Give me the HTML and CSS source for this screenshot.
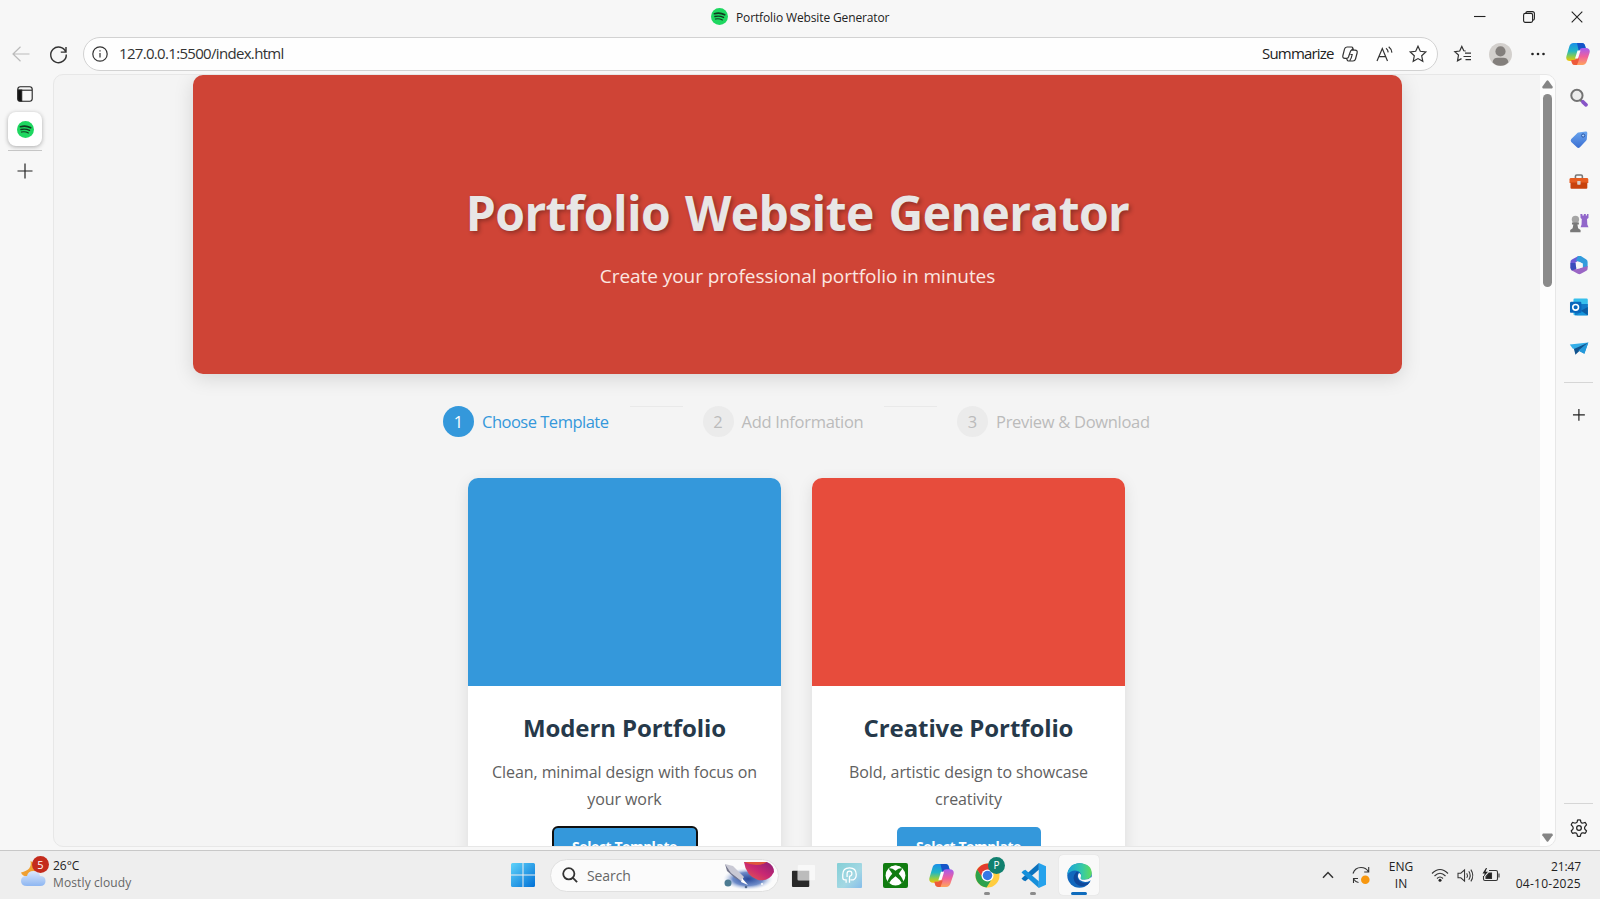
FILE: index.html
```html
<!DOCTYPE html>
<html lang="en">
<head>
<meta charset="utf-8">
<title>Portfolio Website Generator</title>
<link rel="stylesheet" href="styles.css">
</head>
<body>
<svg width="0" height="0" class="defs">
  <defs>
    <linearGradient id="cpA" x1="0" y1="0" x2="0" y2="1"><stop offset="0" stop-color="#1b8fe8"/><stop offset=".45" stop-color="#22b6c4"/><stop offset=".75" stop-color="#8ccc4c"/><stop offset="1" stop-color="#f5c400"/></linearGradient>
    <linearGradient id="cpB" x1="0" y1="0" x2="0" y2="1"><stop offset="0" stop-color="#a35cf0"/><stop offset=".5" stop-color="#f0609c"/><stop offset="1" stop-color="#ffa45c"/></linearGradient>
    <linearGradient id="win" x1="0" y1="0" x2="1" y2="1"><stop offset="0" stop-color="#5fd3fa"/><stop offset="1" stop-color="#0070d6"/></linearGradient>
    <linearGradient id="edgeG" x1="0" y1="0" x2="1" y2="0"><stop offset="0" stop-color="#1aa4dc"/><stop offset=".6" stop-color="#35c9a8"/><stop offset="1" stop-color="#5fdc5c"/></linearGradient>
    <linearGradient id="cloud" x1="0" y1="0" x2="0" y2="1"><stop offset="0" stop-color="#dce8fa"/><stop offset="1" stop-color="#8db6f2"/></linearGradient>
    <linearGradient id="peo" x1="0" y1="0" x2="1" y2="1"><stop offset="0" stop-color="#84cfd6"/><stop offset=".6" stop-color="#a4d8e4"/><stop offset="1" stop-color="#86bdea"/></linearGradient>
    <linearGradient id="tag" x1="0" y1="0" x2="0" y2="1"><stop offset="0" stop-color="#69a5ee"/><stop offset="1" stop-color="#3c6fd2"/></linearGradient>
    <linearGradient id="planet" x1="0" y1="1" x2="1" y2="0"><stop offset="0" stop-color="#e8604a"/><stop offset=".5" stop-color="#c92872"/><stop offset="1" stop-color="#8a1f78"/></linearGradient>
    <radialGradient id="space"><stop offset="0" stop-color="#27489a"/><stop offset=".6" stop-color="#6e8cc9"/><stop offset="1" stop-color="#d9e2f3" stop-opacity="0"/></radialGradient>
    <symbol id="spotify" viewBox="0 0 16 16"><circle cx="8" cy="8" r="8" fill="#1ed760"/><g fill="none" stroke="#123a20" stroke-linecap="round"><path d="M3.2 5.4c3.2-.9 6.800-.6 9.700 1" stroke-width="1.500"/><path d="M3.700 8c2.800-.7 5.700-.4 8.100.9" stroke-width="1.300"/><path d="M4.200 10.400c2.300-.5 4.500-.3 6.500.8" stroke-width="1.100"/></g></symbol>
    <symbol id="copilot" viewBox="0 0 24 24"><path d="M7.500 1H16c1.700 0 2.500 1 3 2.500L20 7h-3.500c-2 0-3 1-3.600 3l-2 6.500c-.5 1.700-1.500 2.500-3.200 2.500H4C1 19-.4 17 .5 14L3.300 4.500C4 2.200 5.300 1 7.500 1z" fill="url(#cpA)"/><path d="M11 1h5c1.700 0 2.500 1 3 2.500L20 7h-3.500c-2 0-3 .8-3.600 2.700z" fill="#1554c8"/><path d="M16.500 23H9c-1.700 0-2.700-.8-3.200-2.500L5.200 18h2.500c2 0 3-1 3.500-2.500l2.200-7C14 6.700 15 6 16.500 6H20c3 0 4.400 2 3.500 5l-2.800 8.500c-.7 2.300-2 3.500-4.200 3.500z" fill="url(#cpB)"/><path d="M5.200 18h2.500c2 0 3-1 3.500-2.500l.8-2.500 1 4.500-2 5.500H9c-1.700 0-2.700-.8-3.200-2.500z" fill="#ee5a3a"/><path d="M11.500 8.500h3l-2.500 8h-3z" fill="#fafafa"/></symbol>
  </defs>
</svg>
<div class="screen">
  <header class="titlebar">
    <div class="tab-title"><svg class="s17"><use href="#spotify"/></svg><span>Portfolio Website Generator</span></div>
    <div class="window-controls">
      <svg viewBox="0 0 12 12"><path d="M0 5.500h11.500"/></svg>
      <svg viewBox="0 0 12 12"><rect x=".6" y="2.400" width="9" height="9" rx="1.600"/><path d="M3 2.200V2Q3 .6 4.400.6h5Q11.400.6 11.400 2.600v5Q11.400 9 10 9.200"/></svg>
      <svg viewBox="0 0 12 12"><path d="M.7.7l10.600 10.600M11.300.7L.7 11.300"/></svg>
    </div>
  </header>

  <nav class="toolbar">
    <svg class="back" viewBox="0 0 18 16"><path d="M8.500.8L1 8l7.500 7.200M1 8h16.500"/></svg>
    <svg class="reload" viewBox="0 0 20 20"><path d="M17.700 7.500A8.200 8.200 0 1 0 18.200 10M17.900 2v5.500h-5.500"/></svg>
    <div class="address">
      <svg class="info" viewBox="0 0 16 16"><circle cx="8" cy="8" r="7.200"/><path d="M8 7v4.500M8 4.300v1.300"/></svg>
      <span class="url">127.0.0.1:5500/index.html</span>
      <span class="summarize">Summarize</span>
      <svg class="cp-line" viewBox="0 0 16 16"><path d="M5 1h4.500q1 0 1.300 1l.7 2.200H10Q8.800 4.200 8.400 5.500L6.500 11Q6 12.300 4.800 12.300H3Q.2 12.300.9 9.500L2.500 3.200Q3 1 5 1zM11 15H6.500q-1 0-1.300-1l-.7-1.700M11.500 4.200H13q2.800 0 2.100 2.800l-1.600 6Q13 15 11 15M10.800 2.500L9.300 4.400M8.400 8.500h1.800Q9.500 12.300 7.800 14.500"/></svg>
      <svg class="read" viewBox="0 0 17 16"><path d="M1 15L6.300 2.500 11.500 15M3 10.700h6.600M10 2.200q2 1.300 2.200 4.200M12.700.7q2.900 2.200 3.200 5.900"/></svg>
      <svg class="star" viewBox="0 0 18 18"><path d="M9 1.200l2.300 5.100 5.500.7-4.100 3.800 1.100 5.500L9 13.600l-4.800 2.700 1.100-5.500L1.200 7l5.500-.7z"/></svg>
    </div>
    <svg class="favs" viewBox="0 0 18 18"><path d="M11.700 6L9.800 5.800 7.800 1.500 5.700 6l-4.900.7L4.500 10l-1 5.800 4-2.200M11 8.200h6M9.500 11.500H17M11.500 14.700H17"/></svg>
    <svg class="avatar" viewBox="0 0 24 24"><circle cx="12" cy="12" r="12" fill="#d3d0cd"/><circle cx="12" cy="8.800" r="5.300" fill="#837f7c"/><path d="M3.700 20Q4.500 15.500 9 15.500h6q4.500 0 5.300 4.500Q17 23.700 12 23.700T3.700 20z" fill="#837f7c"/></svg>
    <svg class="more" viewBox="0 0 14 4"><circle cx="1.500" cy="2" r="1.300"/><circle cx="7" cy="2" r="1.300"/><circle cx="12.500" cy="2" r="1.300"/></svg>
    <svg class="copilot"><use href="#copilot"/></svg>
  </nav>

  <div class="workspace">
    <aside class="tabs-rail">
      <svg class="tabs-icon" viewBox="0 0 16 16"><rect x=".8" y=".8" width="14.400" height="14.400" rx="2.500"/><path d="M1 4.200h14"/><path d="M1 4h3.700v11H2.500Q1 15 1 13z" fill="#111"/></svg>
      <div class="active-tab"><svg class="s17"><use href="#spotify"/></svg></div>
      <div class="tab-rule"></div>
      <svg class="plus" viewBox="0 0 16 16"><path d="M8 .5v15M.5 8h15"/></svg>
    </aside>

    <main class="page">
      <div class="content">
        <section class="hero">
          <h1>Portfolio Website Generator</h1>
          <p>Create your professional portfolio in minutes</p>
        </section>
        <ol class="steps">
          <li class="step active"><b>1</b><span class="t1">Choose Template</span></li>
          <li class="line"></li>
          <li class="step"><b>2</b><span class="t2">Add Information</span></li>
          <li class="line"></li>
          <li class="step"><b>3</b><span class="t3">Preview &amp; Download</span></li>
        </ol>
        <section class="cards">
          <article class="card">
            <div class="preview blue"></div>
            <h2>Modern Portfolio</h2>
            <p>Clean, minimal design with focus on<br>your work</p>
            <button class="select focused">Select Template</button>
          </article>
          <article class="card">
            <div class="preview red"></div>
            <h2>Creative Portfolio</h2>
            <p>Bold, artistic design to showcase<br>creativity</p>
            <button class="select">Select Template</button>
          </article>
        </section>
      </div>
      <div class="scrollbar">
        <svg viewBox="0 0 11 9"><path d="M4.600.8q.9-1 1.800 0l4.300 6Q11 8.500 9.800 8.500H1.200Q0 8.500.3 6.800z"/></svg>
        <i></i>
        <svg class="down" viewBox="0 0 11 9"><path d="M4.600 8.200q.9 1 1.800 0l4.300-6Q11 .5 9.800.5H1.200Q0 .5.3 2.200z"/></svg>
      </div>
    </main>

    <aside class="apps-rail">
      <svg viewBox="0 0 20 20"><path d="M11.500 12l1.500 1.500" stroke="#777" stroke-width="2.500"/><path d="M14 14l3.200 3" stroke="#8855c8" stroke-width="3.800" stroke-linecap="round"/><circle cx="8" cy="7.500" r="5.700" fill="#ececec" stroke="#737373" stroke-width="2"/></svg>
      <svg viewBox="0 0 20 20"><path d="M9.500 2.600L17 1.500q1.500 0 1.500 1.500L18 9q0 1-1 2l-6 6.500q-1.500 1.200-3 0L2.300 12q-1.200-1.500 0-3L8 3.500q.7-.8 1.500-.9z" fill="url(#tag)"/><circle cx="14.300" cy="5.600" r="1.600" fill="#a8d1ff" stroke="#244fa0"/></svg>
      <svg viewBox="0 0 20 20"><path d="M6.500 6.500V4.300q0-1.300 1.300-1.300h4.400q1.300 0 1.300 1.300v2.200" fill="none" stroke="#777" stroke-width="1.600"/><path d="M2 6h16q1.500 0 1.500 1.500V11H.5V7.500Q.5 6 2 6z" fill="#e65c20"/><path d="M1.500 10.500h17V16q0 1-1 1h-15q-1 0-1-1z" fill="#c8420c"/><rect x="8.300" y="9" width="3.400" height="3.800" rx=".6" fill="#d9cfca"/></svg>
      <svg viewBox="0 0 20 20"><path d="M11.500 1h2v1.500H15V1h2v1.500h1.200V1h1.500v4l-1.500 1 .3 5.500 1.200 3h-8l1-3 .2-5.500-1.200-1z" fill="#9166ca"/><circle cx="6.500" cy="6.500" r="3.700" fill="#a5a5a5"/><path d="M3 9.500h7v2H8.500l.7 3.800 2.500 2v2.200H1.200v-2.200l2.500-2 .7-3.800H3z" fill="#797979"/></svg>
      <svg viewBox="0 0 20 20"><path d="M9.500 1L3 4.500Q1.500 5.500 1.500 7v6l5-2V7.500L13 3.500z" fill="#6d5bd6"/><path d="M9 1h3l5.500 3.500q1.300 1 1.300 2.500v5.500L14 15V8.500L7 5.500z" fill="#329bdc"/><path d="M18.800 11v3q0 1.300-1.300 2L12 19q-1.500.8-3 0L2.500 15.500 1.300 12l6.200 2.500z" fill="#9a66c5"/><path d="M1.500 8v5.500q.3 1.500 1.500 2.200L7.500 14 6.500 8z" fill="#3b4dbb"/><path d="M10.200 6.700l3.100 1.800v3.400l-3.100 1.800-3.100-1.800V8.500z" fill="#f7f7f7"/></svg>
      <svg viewBox="0 0 20 20"><rect x="4.500" y="1.500" width="14.500" height="17" rx="1.200" fill="#36bfec"/><path d="M5 7h14v11.500H6z" fill="#117ac7"/><path d="M19 10v8.500H7.500z" fill="#1493da"/><path d="M12 14l7-4v8.500z" fill="#0c5ba2"/><rect x="1" y="4.800" width="11.500" height="11.200" rx="1.200" fill="#0967bb"/><circle cx="6.700" cy="10.400" r="2.900" fill="none" stroke="#fff" stroke-width="1.600"/></svg>
      <svg viewBox="0 0 20 20"><path d="M.8 5.500L19.500 3.500 9 11.500 3.700 9.500z" fill="#35aee8"/><path d="M19.500 3.500L15.500 15 9.500 11.500z" fill="#168acd"/><path d="M19.500 3.500L6.500 16 5 10z" fill="#11538e"/><path d="M19.500 3.500L15.500 15 9.500 11.500z" fill="#2398da"/></svg>
      <hr>
      <svg class="plus" viewBox="0 0 20 20"><path d="M10 4v12M4 10h12"/></svg>
      <div class="rail-end"><hr>
        <svg class="gear" viewBox="0 0 24 24"><path d="M9.700 3.500L10.300 1.200q1.700-.4 3.400 0l.6 2.300q.4 1 1.500 1.300l1.300-.1 2.200-.7q1.200 1.300 1.700 3l-1.600 1.700q-.7.800-.7 1.900t.7 1.900l1.600 1.700q-.5 1.700-1.700 3l-2.200-.6q-1.100-.2-2 .3-.7.500-1 1.400l-.5 2.200q-1.700.4-3.400 0l-.5-2.200q-.3-1-1.100-1.500-.9-.5-2-.2l-2.200.6q-1.200-1.300-1.700-3l1.600-1.700q.7-.8.700-1.900t-.7-1.900L2.700 7Q3.200 5.300 4.400 4l2.200.7q1.100.2 2-.3.800-.2 1.100-.9z" transform="translate(0 1.300)"/><circle cx="12" cy="12" r="2.800"/></svg>
      </div>
    </aside>
  </div>

  <footer class="taskbar">
    <div class="weather">
      <svg viewBox="0 0 28 32"><path d="M10.500 5q2 9-9.500 11.500 1.500 4.500 8 4 9-2 8-12z" fill="#f0a030"/><path d="M7 30q-6 0-6-5t6-5q1-5 6.500-5t6.500 5q5.500 0 5.500 5T20 30z" fill="url(#cloud)"/></svg>
      <span class="badge">5</span>
      <div><div class="temp">26°C</div><div class="cond">Mostly cloudy</div></div>
    </div>
    <div class="dock">
      <svg class="start" viewBox="0 0 24 24"><path d="M0 1.500Q0 0 1.500 0h10v11.500H0zM12.500 0h10Q24 0 24 1.500v10H12.500zM0 12.500h11.500V24h-10Q0 24 0 22.500zM12.500 12.500H24v10q0 1.500-1.500 1.500h-10z" fill="url(#win)"/></svg>
      <div class="search">
        <svg class="glass" viewBox="0 0 16 16"><circle cx="6.800" cy="6.800" r="5.600"/><path d="M10.900 10.900l4.200 4.200"/></svg>
        <span>Search</span>
        <svg class="art" viewBox="0 0 52 28"><ellipse cx="25" cy="18" rx="25" ry="11" fill="url(#space)"/><circle cx="5" cy="22" r="3.500" fill="#4d7b92"/><path d="M21 1h23q7 3 7 10-5 10-16 8Q23 15 21 1z" fill="url(#planet)"/><path d="M21 1h23q-10 6-23 0z" fill="#e0553c"/><path d="M2 3l8 2 11 11-3 4L8 12z" fill="#c9c9d4"/><path d="M2 3l6 9 10 8-6-3-8-7z" fill="#74768c"/><path d="M19 17l6 7-7-3z" fill="#fff"/><circle cx="23" cy="26" r="1.300" fill="#52698e"/><circle cx="39" cy="23" r="1" fill="#fff"/></svg>
      </div>
      <div class="app"><svg viewBox="0 0 26 26"><rect x="1" y="8" width="18" height="17" rx="1" fill="#292929"/><rect x="7" y="2" width="18" height="16" rx="1" fill="#f8f8f8"/><path d="M7 8h12v10H7z" fill="#bcbcbc"/></svg></div>
      <div class="app"><svg viewBox="0 0 26 26"><rect width="26" height="26" rx="1" fill="url(#peo)"/><path d="M9.500 20.500v-3H8q-2 0-2-2.500v-3q0-7 7-7t7 7q0 4.500-3 5.500H14M10.500 14.500V11q0-2.500 2.500-2.500t2.500 2.500-2.500 3v6.500" fill="none" stroke="#fff" stroke-width="1.300"/></svg></div>
      <div class="app"><svg viewBox="0 0 26 26"><rect width="26" height="26" rx="2" fill="#107c10"/><circle cx="13" cy="13" r="10.300" fill="#fff"/><path d="M5.800 5.600Q9 4.700 13 8q4-3.300 7.200-2.400l-3.800 5.700q4.500 5 4.800 8.500l-1.600 1.200Q17.500 17 13 13.800 8.500 17 6.400 21l-1.600-1.200q.3-3.500 4.800-8.500z" fill="#107c10"/><path d="M7.500 4.200Q10.500 4 13 6q2.500-2 5.500-1.800Q13 .8 7.500 4.200z" fill="#fff"/></svg></div>
      <div class="app"><svg><use href="#copilot"/></svg></div>
      <div class="app run"><svg viewBox="0 0 26 26"><circle cx="13" cy="13" r="12.500" fill="#ffcd40"/><path d="M2.200 6.800A12.500 12.500 0 0 1 23.800 6.800L13 7.500 8 16z" fill="#e33b2e"/><path d="M2.200 6.800A12.500 12.500 0 0 0 12 25.500l6-9.600-10-.2z" fill="#2da24c"/><circle cx="13" cy="13" r="6.300" fill="#fff"/><circle cx="13" cy="13" r="4.900" fill="#3578e5"/></svg><span class="profile">P</span></div>
      <div class="app run"><svg viewBox="0 0 26 26"><path d="M18.500 0L26 3.500v19L18.500 26z" fill="#25a2ec"/><path d="M18.500 0v7L4.500 19 2.300 18 .5 16z" fill="#0b72bd"/><path d="M18.500 26v-7L4.500 7 2.300 8 .5 10z" fill="#1690db"/></svg></div>
      <div class="app current"><svg viewBox="0 0 26 26"><circle cx="13" cy="13" r="12.700" fill="#1268bd"/><path d="M.3 12Q2 .3 13.500.3 25.700 1 25.700 11q-.7 6.500-8 6.500-4.500 0-3.500-2.800Q16 11 12 8.500 5.500 6 .3 12z" fill="url(#edgeG)"/><path d="M10 9Q4 15 9.500 21.500 14 26 21 22.600q2-1.200 3-3-6 3-11-.6Q9 15 12 10z" fill="#10489a"/><path d="M12.500 10.500Q10 14 13 17.500q5 4 11.500.6 1 0 .6 1.300l1-.5v-4l-1.300-.2q-2.500 3-7 2.800-4.500 0-3.500-2.800Q15.500 12 12.500 10.500z" fill="#fafafa"/></svg></div>
    </div>
    <div class="tray">
      <svg class="chev" viewBox="0 0 12 8"><path d="M1 6.800l5-5.300 5 5.300"/></svg>
      <svg class="sync" viewBox="0 0 18 18"><path d="M1 7.500Q3 1.500 9 1.500q5 0 7.300 4M16.700 1v5h-4.500M1.500 17v-4.500H6M1.500 13q2 3 5 3.500"/><circle cx="13.300" cy="13.700" r="4.300" fill="#f7970f" stroke="none"/></svg>
      <div class="lang">ENG<br>IN</div>
      <svg class="wifi" viewBox="0 0 18 14"><path d="M1 5.500q8-8 16 0M3.500 8q5.500-5.500 11 0M6 10.500q3-3 6 0"/><circle cx="9" cy="12.300" r="1.500" fill="#222" stroke="none"/></svg>
      <svg class="vol" viewBox="0 0 18 16"><path d="M1 5.500h3L8 2v12l-4-3.500H1zM10.300 5.500q1.500 2.500 0 5M12.500 3.500q3 4.500 0 9M14.700 1.700q4.200 6.300 0 12.600"/></svg>
      <svg class="battery" viewBox="0 0 18 14"><path d="M7 2.500h7q1.500 0 1.500 1.500v7q0 1.500-1.500 1.500H3q-1.500 0-1.500-1.500V8M17 5.500v4"/><path d="M4 10.500V8.500L7 5h2.500v5.500z" fill="#222"/><path d="M4 0L.5 5.500h2.300L1.500 9 6 3.800H3.500L5 0z" fill="#222" stroke="none"/></svg>
      <div class="clock">21:47<br><span>04-10-2025</span></div>
    </div>
  </footer>
</div>
</body>
</html>
```

FILE: styles.css
```css
* { box-sizing: border-box; }
body { margin: 0; overflow: hidden; font-family: "Open Sans", "Noto Sans", sans-serif; color: #222; }
svg { display: block; flex: none; overflow: visible; }
.defs { position: absolute; }
.screen { width: 1600px; height: 899px; display: grid; grid-template-rows: 34px 40px 776px 49px; background: #f7f7f7; }
.s17 { width: 17px; height: 17px; }

.titlebar { display: flex; justify-content: space-between; }
.tab-title { display: flex; align-items: center; gap: 8px; margin-left: 711px; height: 33px; font-size: 12px; letter-spacing: -.13px; white-space: nowrap; }
.tab-title span { padding-top: 1px; }
.window-controls { display: flex; gap: 36.500px; align-items: center; padding-right: 17px; height: 33px; }
.window-controls svg { width: 12px; height: 12px; fill: none; stroke: #222; stroke-width: 1.1; }

.toolbar { display: flex; align-items: center; }
.toolbar svg { fill: none; stroke: #333; stroke-width: 1.2; }
.toolbar .back { width: 18px; height: 16px; margin-left: 12px; stroke: #bbb; }
.toolbar .reload { width: 19px; height: 19px; margin-left: 19px; stroke-width: 1.5; }
.address { width: 1355px; height: 34px; margin-left: 15px; border: 1px solid #d2d2d2; border-radius: 17px; background: #fefefe; display: flex; align-items: center; }
.info { width: 16px; height: 16px; margin-left: 8px; }
.url { margin-left: 11px; padding-bottom: 2px; font-size: 15px; letter-spacing: -.68px; flex: 1; color: #333; }
.summarize { padding-bottom: 2px; font-size: 15px; letter-spacing: -.8px; width: 70px; white-space: nowrap; }
.cp-line { width: 16px; height: 16px; margin-left: 10px; }
.read { width: 17px; height: 16px; margin-left: 18px; }
.star { width: 18px; height: 18px; margin: 0 10px 0 16px; }
.favs { width: 18px; height: 18px; margin-left: 16px; }
.toolbar .avatar { width: 23px; height: 23px; margin-left: 17px; stroke: none; }
.toolbar .more { width: 14px; height: 4px; margin-left: 19px; fill: #222; stroke: none; }
.toolbar .copilot { width: 24px; height: 24px; margin-left: 21px; stroke: none; }

.workspace { display: grid; grid-template-columns: 53px 1503px 44px; height: 773px; }
.tabs-rail { display: flex; flex-direction: column; align-items: center; padding: 12px 3px 0 0; }
.tabs-icon { width: 16px; height: 16px; margin-right: 1px; fill: none; stroke: #222; stroke-width: 1.1; }
.active-tab { width: 34px; height: 34px; margin-top: 10px; border-radius: 8px; background: #fff; box-shadow: 0 1px 4px #aaa; display: grid; place-items: center; }
.tab-rule { width: 34px; height: 1px; margin-top: 4px; background: #c6c6c6; }
.plus { width: 16px; height: 16px; fill: none; stroke: #222; stroke-width: 1.2; }
.tabs-rail .plus { margin: 12px 1px 0 0; }

.page { display: flex; height: 773px; overflow: hidden; background: #f4f4f4; border: 1px solid #e7e7e7; border-radius: 10px; }
.content { flex: 1; padding-left: 139px; }
.hero { width: 1209px; height: 299px; border-radius: 10px; background: #cf4436; box-shadow: 0 4px 20px rgba(0,0,0,.13); text-align: center; color: #fbe7e1; padding-top: 97px; }
.hero h1 { margin: 0; font-size: 48px; line-height: 82px; letter-spacing: -.6px; word-spacing: 3px; font-weight: 700; color: #e8e6e5; text-shadow: 2px 2px 4px rgba(0,0,0,.3); }
.hero p { margin: 6px 0 0; font-size: 19px; line-height: 33px; letter-spacing: -.05px; }
.steps { display: flex; list-style: none; margin: 32px 0 0 250px; padding: 0; height: 31px; }
.step { display: flex; align-items: center; color: #bbb; font-size: 16.500px; white-space: nowrap; }
.step b { width: 31px; height: 31px; margin-right: 8px; border-radius: 50%; display: grid; place-items: center; font-weight: 400; background: #ebebeb; }
.step.active { color: #3498db; }
.step.active b { background: #3498db; color: #fff; }
.t1 { width: 127.500px; letter-spacing: -.5px; }
.t2 { width: 122.500px; letter-spacing: -.3px; }
.t3 { width: 155px; letter-spacing: -.3px; }
.line { width: 53px; height: 1px; margin: 0 20px; background: #e9e9e9; }
.cards { display: flex; gap: 31px; margin: 41px 0 0 275px; }
.card { width: 313px; height: 420px; flex: none; background: #fff; border-radius: 10px; box-shadow: 0 4px 15px rgba(0,0,0,.1); display: flex; flex-direction: column; align-items: center; overflow: hidden; text-align: center; }
.preview { width: 313px; height: 208px; flex: none; }
.blue { background: #3498db; }
.red { background: #e74c3c; }
.card h2 { margin: 22px 0 0; font-size: 24px; line-height: 40px; letter-spacing: -.1px; color: #26394a; }
.card p { margin: 11px 0 0; font-size: 16px; line-height: 26.500px; letter-spacing: -.08px; color: #606060; white-space: nowrap; }
.select { flex: none; width: 144px; height: 39px; margin-top: 15px; padding: 0; border: 0; border-radius: 5px; background: #3498db; color: #fff; font: 700 14px "Open Sans", sans-serif; letter-spacing: -.45px; }
.focused { outline: 2px solid #101010; outline-offset: -1px; }
.scrollbar { width: 15px; background: #fdfdfd; display: flex; flex-direction: column; align-items: center; padding: 5px 0 4px; }
.scrollbar svg { width: 11px; height: 9px; fill: #858585; }
.scrollbar i { width: 9px; height: 193px; margin-top: 5px; border-radius: 5px; background: #8b8b8b; }
.scrollbar .down { margin-top: auto; }

.apps-rail { display: flex; flex-direction: column; align-items: center; padding: 14px 0 0 1px; gap: 22px; height: 773px; }
.apps-rail > svg { width: 19.800px; height: 19.800px; }
.apps-rail hr { width: 29px; height: 1px; margin: 1px 0 0; border: 0; background: #d6d6d6; flex: none; }
.rail-end { margin-top: auto; display: flex; flex-direction: column; gap: 14px; align-items: center; padding-bottom: 9px; }
.gear { width: 20px; height: 20px; fill: none; stroke: #222; stroke-width: 1.5; }

.taskbar { background: #eee; border-top: 1px solid #c8c8c8; display: grid; grid-template-columns: 511px 789px 300px; font-size: 12px; }
.weather { position: relative; display: flex; padding: 5px 0 0 20px; gap: 5px; }
.weather svg { width: 28px; height: 32px; }
.badge { position: absolute; left: 32px; top: 5px; width: 17px; height: 17px; border-radius: 50%; background: #c42b1c; color: #fff; font-size: 11px; line-height: 17px; text-align: center; }
.temp, .cond { line-height: 17px; white-space: nowrap; }
.temp { margin-top: 1px; letter-spacing: 0; }
.cond { color: #666; letter-spacing: .12px; }
.dock { display: flex; align-items: center; height: 48px; }
.start { width: 24px; height: 24px; }
.search { width: 229px; height: 33px; margin: 0 1px 0 15px; border-radius: 17px; border: 1px solid #e0e0e0; background: #fbfbfb; display: flex; align-items: center; padding: 0 3px 0 11px; font-size: 14px; color: #666; letter-spacing: -.1px; }
.search span { margin-left: 9px; flex: 1; }
.glass { width: 16px; height: 16px; fill: none; stroke: #333; stroke-width: 1.8; }
.art { width: 52px; height: 28px; }
.app { position: relative; width: 40px; height: 40px; margin: 0 3px; display: grid; place-items: center; border-radius: 4px; }
.app svg { width: 25px; height: 25px; }
.run::after { content: ""; position: absolute; left: 17px; bottom: 0; width: 6px; height: 3px; border-radius: 2px; background: #8b8b8b; }
.profile { position: absolute; left: 21px; top: 2px; width: 17px; height: 17px; border-radius: 50%; background: #11806f; color: #fff; font-size: 10px; line-height: 17px; text-align: center; }
.current { background: #f9f9f9; box-shadow: 0 0 1px #ccc; }
.current::after { content: ""; position: absolute; left: 12px; bottom: 0; width: 16px; height: 3px; border-radius: 2px; background: #0f6cbd; }
.tray { display: flex; align-items: center; height: 48px; padding-left: 22px; }
.tray svg { fill: none; stroke: #333; stroke-width: 1.1; }
.tray .chev { width: 12px; height: 8px; stroke-width: 1.500; }
.sync { width: 18px; height: 18px; margin-left: 18px; }
.lang { width: 40px; margin-left: 11px; text-align: center; line-height: 17px; letter-spacing: 0; }
.wifi { width: 18px; height: 14px; margin-left: 10px; }
.vol { width: 17px; height: 15px; margin-left: 8px; }
.battery { width: 18px; height: 14px; margin-left: 8px; }
.clock { flex: 1; padding-right: 19px; text-align: right; line-height: 17px; white-space: nowrap; letter-spacing: -.1px; }
.clock span { letter-spacing: .27px; }
```
